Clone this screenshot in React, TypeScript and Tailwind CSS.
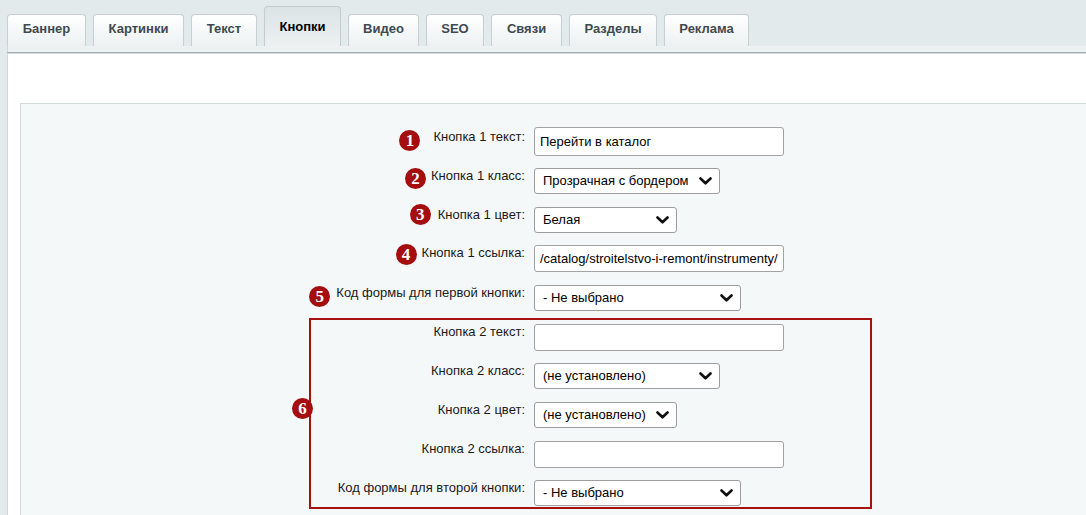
import { ReactNode } from "react";

const tabs = [
    { name: "Баннер", w: "w-[79px]" },
    { name: "Картинки", w: "w-[91px]" },
    { name: "Текст", w: "w-[66px]" },
    { name: "Кнопки", w: "w-[77px]", active: true },
    { name: "Видео", w: "w-[71px]" },
    { name: "SEO", w: "w-[58px]" },
    { name: "Связи", w: "w-[71px]" },
    { name: "Разделы", w: "w-[88px]" },
    { name: "Реклама", w: "w-[85px]" },
];

function Badge({ n, className = "" }: { n: number; className?: string }) {
    return (
        <span
            className={`flex h-[21px] w-[21px] shrink-0 items-center justify-center rounded-full bg-[#a50e0e] text-[17px] font-bold leading-none text-white font-['Liberation_Serif',serif] ${className}`}
        >
            {n}
        </span>
    );
}

function Chevron() {
    return (
        <svg width="13" height="8" viewBox="0 0 13 8" className="shrink-0">
            <polyline
                points="1.5,1.5 6.5,6.3 11.5,1.5"
                fill="none"
                stroke="#111"
                strokeWidth="2.6"
                strokeLinecap="round"
                strokeLinejoin="round"
            />
        </svg>
    );
}

function TextInput({ value = "", h = "h-[27px]" }: { value?: string; h?: string }) {
    return (
        <div className={`flex w-[250px] items-center rounded-[3px] border border-[#a3a3a3] bg-white px-[5px] text-[13px] text-black ${h}`}>
            {value}
        </div>
    );
}

function Select({ value, w }: { value: string; w: string }) {
    return (
        <div className={`flex h-[26px] items-center justify-between rounded-[3px] border border-[#9d9d9d] bg-white pl-[8px] pr-[7px] text-[13px] text-black ${w}`}>
            <span>{value}</span>
            <Chevron />
        </div>
    );
}

function Row({
    label,
    badge,
    labelW,
    labelPad = "pt-0",
    className = "",
    children,
}: {
    label: string;
    badge?: ReactNode;
    labelW: string;
    labelPad?: string;
    className?: string;
    children: ReactNode;
}) {
    return (
        <div className={`flex items-start gap-[9px] ${className}`}>
            <div className={`flex shrink-0 items-start justify-end text-[13px] leading-[16px] text-[#1a1a1a] ${labelPad} ${labelW}`}>
                {badge}
                <span>{label}</span>
            </div>
            {children}
        </div>
    );
}

export default function App() {
    return (
        <div className="h-[515px] w-full overflow-hidden bg-[#e3eaec] pt-[7px] font-['Liberation_Sans',Arial,sans-serif]">
            {/* tab strip */}
            <div className="flex h-[39px] items-end gap-[7px] pl-[7px]">
                {tabs.map((t) =>
                    t.active ? (
                        <div
                            key={t.name}
                            className={`flex h-[40px] items-center justify-center rounded-t-[4px] border border-b-0 border-[#c3cccf] bg-gradient-to-b from-[#dbe3e5] to-[#edf1f2] text-[13px] font-bold text-black ${t.w}`}
                        >
                            {t.name}
                        </div>
                    ) : (
                        <div
                            key={t.name}
                            className={`flex h-[32px] items-center justify-center rounded-t-[4px] border border-b-0 border-[#c6cfd2] bg-gradient-to-b from-white to-[#edf1f2] pb-[3px] text-[13px] font-bold text-[#3f4a4f] ${t.w}`}
                        >
                            {t.name}
                        </div>
                    )
                )}
            </div>
            <div className="ml-[7px] h-[6px] border-l border-[#cfd6d8] bg-[#edf1f2]" />
            <div className="ml-[7px] h-[1px] bg-[#a3acaf]" />
            <div className="ml-[7px] h-[1px] bg-[#d5dbdd]" />

            {/* content panel */}
            <div className="ml-[7px] h-full border-l border-[#d0d7d9] bg-white pl-[12px] pt-[49px]">
                <div className="h-full border-l border-t border-[#d2d9db] bg-[#f5f8f9] pt-[23px]">
                    <Row
                        label="Кнопка 1 текст:"
                        labelW="w-[504px]"
                        labelPad="pt-[2px]"
                        className="mb-[12px]"
                        badge={<Badge n={1} className="mr-[13px] mt-[1px]" />}
                    >
                        <TextInput value="Перейти в каталог" h="h-[29px]" />
                    </Row>
                    <Row
                        label="Кнопка 1 класс:"
                        labelW="w-[504px]"
                        className="mb-[13px]"
                        badge={<Badge n={2} className="mr-[5px] mt-0" />}
                    >
                        <Select value="Прозрачная с бордером" w="w-[186px]" />
                    </Row>
                    <Row
                        label="Кнопка 1 цвет:"
                        labelW="w-[504px]"
                        className="mb-[12px]"
                        badge={<Badge n={3} className="mr-[7px] -mt-[3px]" />}
                    >
                        <Select value="Белая" w="w-[143px]" />
                    </Row>
                    <Row
                        label="Кнопка 1 ссылка:"
                        labelW="w-[504px]"
                        className="mb-[13px]"
                        badge={<Badge n={4} className="mr-[5px] -mt-[1px]" />}
                    >
                        <TextInput value="/catalog/stroitelstvo-i-remont/instrumenty/" />
                    </Row>
                    <Row
                        label="Код формы для первой кнопки:"
                        labelW="w-[504px]"
                        badge={<Badge n={5} className="mr-[6px] mt-[1px]" />}
                    >
                        <Select value="- Не выбрано" w="w-[207px]" />
                    </Row>

                    {/* second button group */}
                    <div className="relative ml-[288px] mt-[7px] w-[563px] border-2 border-[#a8100f] pb-[1px] pt-[4px]">
                        <Badge n={6} className="absolute -left-[19px] top-[78px]" />
                        <Row label="Кнопка 2 текст:" labelW="w-[214px]" className="h-[39px]">
                            <TextInput />
                        </Row>
                        <Row label="Кнопка 2 класс:" labelW="w-[214px]" className="h-[39px]">
                            <Select value="(не установлено)" w="w-[186px]" />
                        </Row>
                        <Row label="Кнопка 2 цвет:" labelW="w-[214px]" className="h-[39px]">
                            <Select value="(не установлено)" w="w-[143px]" />
                        </Row>
                        <Row label="Кнопка 2 ссылка:" labelW="w-[214px]" className="h-[39px]">
                            <TextInput />
                        </Row>
                        <Row label="Код формы для второй кнопки:" labelW="w-[214px]">
                            <Select value="- Не выбрано" w="w-[207px]" />
                        </Row>
                    </div>
                </div>
            </div>
        </div>
    );
}
